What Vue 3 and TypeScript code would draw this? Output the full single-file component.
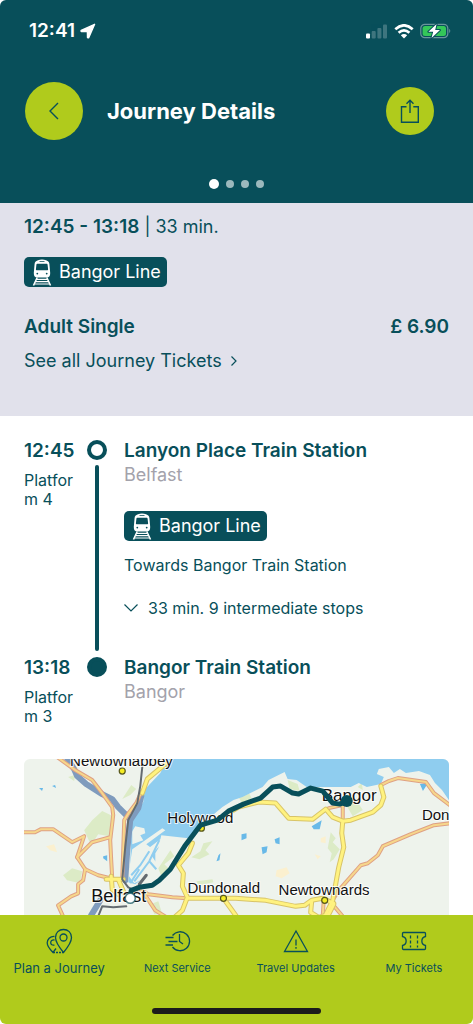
<script setup lang="ts">
import { ref } from 'vue'

interface Tab {
  id: string
  label: string
}

interface Place {
  name: string
  x: number
  y: number
  size: number
}

const tabs: Tab[] = [
  { id: 'plan', label: 'Plan a Journey' },
  { id: 'next', label: 'Next Service' },
  { id: 'updates', label: 'Travel Updates' },
  { id: 'tickets', label: 'My Tickets' },
]

const activeTab = ref('plan')
const activePage = ref(0)
const stopsOpen = ref(false)

const orangeRoads: string[] = [
  'M57 757 75 770 92 780 102 793 112 807 113 815 110 840 111 860 112 878',
  'M22 832H35L41 829H53L72 842 84 836 82 842 77 857 85 869 98 875 118 880',
  'M77 857 92 842 110 837',
  'M85 869 83 880 78 884V893L71 896 58 905 63 916 68 925',
  'M141 792 136 803 129 812 124 820 123 850 122 878',
  'M380 785 388 781 397 778 425 782 433 793 450 806',
  'M328 808 342 805V820',
  'M333 898 338 890 360 865 367 863 377 855 382 846 410 834 433 825 450 823',
  'M137 887 148 894 172 897 187 898',
  'M145 895 155 910 168 918',
  'M331 903 342 916',
  'M323 900 322 916',
]

const yellowRoads: string[] = [
  'M165 764 147 779 142 793',
  'M192 843 188 853 178 865 183 873 182 886 187 897 182 910 173 918',
  'M187 898 235 898 265 900 295 906 304 905 311 900 322 898 333 903',
  'M223 898 236 916',
  'M228 813 238 807 258 802 275 803 288 818 312 819 325 809 332 817 342 821 350 820 372 812 380 805 383 797 380 786',
  'M342 821 341 833 343 847 338 867 332 900 325 914',
  'M311 901 310 912 318 917 328 914 333 904',
  'M111 876 112 889 118 894M106 879 123 879M118 879 124 893',
]

const places: Place[] = [
  { name: 'Newtownabbey', x: 70, y: 766, size: 15 },
  { name: 'Holywood', x: 167, y: 823, size: 15 },
  { name: 'Bangor', x: 321, y: 801, size: 17 },
  { name: 'Don', x: 421, y: 820, size: 15 },
  { name: 'Belfast', x: 91, y: 902, size: 18 },
  { name: 'Dundonald', x: 187, y: 893, size: 15 },
  { name: 'Newtownards', x: 278, y: 895, size: 15 },
]
</script>

<template>
  <div class="app">
    <svg class="defs" aria-hidden="true">
      <symbol id="train" viewBox="0 0 20 27">
        <path
          fill="currentColor"
          fill-rule="evenodd"
          d="M6 1.2C8.500 .4 11.500 .4 14 1.200C16.500 2 17.200 3 17.400 5L18.200 14C18.300 17 17 18.500 14.500 18.500H5.500C3 18.500 1.700 17 1.800 14L2.600 5C2.800 3 3.500 2 6 1.200ZM7.500 2.200V3.100H12.500V2.200ZM5.200 4.800C4.700 4.900 4.500 5.200 4.400 5.700L3.900 10.200C3.800 11 4.200 11.300 4.900 11.300H15.100C15.800 11.300 16.200 11 16.100 10.200L15.600 5.700C15.500 5.200 15.300 4.900 14.800 4.800ZM5.300 13.700A.9 .9 0 1 0 5.300 15.500A.9 .9 0 1 0 5.300 13.700ZM14.700 13.700A.9 .9 0 1 0 14.700 15.500A.9 .9 0 1 0 14.700 13.700Z"
        />
        <path d="M5.200 18.500 1.500 26.500M14.800 18.500 18.500 26.500" stroke="currentColor" stroke-width="1.600" />
        <path d="M4.600 20.400H15.400M3.700 22.600H16.300M2.700 25H17.300" stroke="currentColor" stroke-width="1.100" />
      </symbol>
    </svg>

    <header class="header">
      <div class="status">
        <div class="clock">
          <span>12:41</span>
          <svg class="locate" viewBox="0 0 16 16" aria-hidden="true">
            <path d="M14.600 1.300 1.200 7.400Q.6 8.200 1.500 8.500L7.400 8.600 7.500 14.400Q7.900 15.300 8.700 14.600Z" fill="#fff" stroke="#fff" stroke-width="1.400" stroke-linejoin="round" />
          </svg>
        </div>
        <div class="signals">
          <svg class="bars" viewBox="0 0 22 15" aria-hidden="true">
            <rect x="0" y="9.500" width="4" height="5" rx="1" fill="#fff" />
            <g fill="#fff" opacity=".22">
              <rect x="5.700" y="7" width="4" height="7.500" rx="1" />
              <rect x="11.400" y="4" width="4" height="10.500" rx="1" />
              <rect x="17" y="0.500" width="4" height="14" rx="1" />
            </g>
          </svg>
          <svg class="wifi" viewBox="0 0 20 15" aria-hidden="true">
            <g fill="none" stroke="#fff" stroke-width="2.700">
              <path d="M1.300 5.300Q10-2.600 18.700 5.300" />
              <path d="M4.600 8.800Q10 4 15.400 8.800" />
            </g>
            <path d="M10 14.500 6.800 11.300Q10 8.700 13.200 11.300Z" fill="#fff" />
          </svg>
          <svg class="battery" viewBox="0 0 32 16" aria-hidden="true">
            <rect x=".8" y="1.300" width="27" height="13.400" rx="4" fill="none" stroke="#fff" stroke-opacity=".4" stroke-width="1.200" />
            <rect x="2.600" y="3" width="23.400" height="10" rx="2.500" fill="#34c759" />
            <path d="M29.300 5.800Q31.200 8 29.300 10.200Z" fill="#fff" fill-opacity=".45" />
            <path d="M16.600 1 8.400 8.800H13.200L11.500 15 20 7.100H15.200Z" fill="#fff" stroke="#084f5a" stroke-width="2" stroke-linejoin="round" paint-order="stroke" />
          </svg>
        </div>
      </div>

      <div class="title-row">
        <button class="round back" type="button" aria-label="Back">
          <svg viewBox="0 0 24 24" aria-hidden="true">
            <path d="M16 4 8 12 16 20" />
          </svg>
        </button>
        <h1>Journey Details</h1>
        <button class="round share" type="button" aria-label="Share">
          <svg viewBox="0 0 24 24" aria-hidden="true">
            <path d="M8.500 7.800H3.500V23.300H20.300V7.800H15.300M12 14V1.500M8.500 4.700 12 1.200 15.500 4.700" />
          </svg>
        </button>
      </div>

      <div class="dots">
        <button
          v-for="n in 4"
          :key="n"
          type="button"
          class="dot"
          :class="{ on: activePage === n - 1 }"
          :aria-label="`Page ${n}`"
          @click="activePage = n - 1"
        ></button>
      </div>
    </header>

    <main class="content">
      <section class="summary">
        <p class="times"><strong>12:45 - 13:18</strong> | 33 min.</p>
        <span class="badge">
          <svg viewBox="0 0 20 27" aria-hidden="true"><use href="#train" /></svg>
          Bangor Line
        </span>
        <div class="fare">
          <strong>Adult Single</strong>
          <strong>£ 6.90</strong>
        </div>
        <a class="all-tickets" href="#tickets">
          See all Journey Tickets
          <svg viewBox="0 0 8 12" aria-hidden="true"><path d="M1.500 1.500 6 6 1.500 10.500" /></svg>
        </a>
      </section>

      <section class="details">
        <ol class="timeline">
          <li class="stop">
            <div class="when">
              <strong>12:45</strong>
              <span class="platform">Platform 4</span>
            </div>
            <div class="track">
              <span class="node open"></span>
              <span class="line"></span>
            </div>
            <div class="where">
              <h2>Lanyon Place Train Station</h2>
              <p class="town">Belfast</p>
              <span class="badge leg">
                <svg viewBox="0 0 20 27" aria-hidden="true"><use href="#train" /></svg>
                Bangor Line
              </span>
              <p class="towards">Towards Bangor Train Station</p>
              <button class="stops" type="button" :aria-expanded="stopsOpen" @click="stopsOpen = !stopsOpen">
                <svg viewBox="0 0 14 10" aria-hidden="true"><path d="M.5 1.500 7 8 13.500 1.500" /></svg>
                33 min. 9 intermediate stops
              </button>
            </div>
          </li>
          <li class="stop">
            <div class="when">
              <strong>13:18</strong>
              <span class="platform">Platform 3</span>
            </div>
            <div class="track"><span class="node"></span></div>
            <div class="where">
              <h2>Bangor Train Station</h2>
              <p class="town">Bangor</p>
            </div>
          </li>
        </ol>

        <svg class="map" viewBox="24 759 424 200" preserveAspectRatio="xMidYMin slice" role="img" aria-label="Route map from Belfast to Bangor">
          <rect x="0" y="740" width="480" height="240" fill="#eef3ec" />
          <g fill="#dcebc6">
            <path d="M102 811 113 816 109 836 98 834 91 845 84 830 92 820Z" />
            <path d="M72 868 82 871 80 883 67 880 63 875Z" />
            <path d="M203 843 212 841 205 850 209 854 199 859 191 857 200 851Z" />
            <path d="M330 832 335 838 332 842 339 849 333 859 329 862 331 853 327 848Z" />
            <path d="M238 797 248 792 251 798 242 804Z" />
            <path d="M346 806 356 801 362 810 352 816Z" />
            <path d="M170 850 174 856 164 864 168 868 161 876 158 868Z" />
            <path d="M287 780 297 784 299 791 289 789Z" />
            <path d="M131 785 136 789 130 795 122 799Z" />
            <path d="M196 881 212 879 213 882 198 885Z" />
            <path d="M150 904 158 901 162 914 154 914Z" />
            <path d="M68 777 75 775 74 781Z" />
            <path d="M357 787 361 783 362 790Z" />
          </g>
          <g fill="#fbf0cf">
            <path d="M46 846 54 844 57 852 50 850Z" />
            <path d="M276 870 286 867 289 873 281 878 275 876Z" />
            <path d="M320 838 325 836 325 843 320 842ZM314 854 320 856 317 859Z" />
          </g>

          <path
            fill="#8fcdef"
            d="M168 757 160 773 144 790 143 802 136 813 132 820 131 835 130 862 128 882 135 884 148 874 155 861V853L158 848 161 835 188 838 198 825 205 821 222 807 233 800 242 797 262 787 268 780 276 776 284 772 287 779 296 780 306 787 350 787 358 783 366 787 380 784 383 777 376 774 378 769 388 767 393 773 399 769 405 773 418 771 429 775 434 783 441 790 450 803V757Z"
          />
          <g fill="#eef3ec">
            <path d="M135 826 144 828 145 833 140 835 143 840 132 844 132 831Z" />
            <path d="M132 849 162 828 165 830 146 844 150 847 143 852 160 839 163 841 151 855 155 861 157 869 146 877 134 883 128 875Z" />
          </g>
          <g fill="none" stroke="#8fcdef" stroke-width="2">
            <path d="M134 881 149 861 159 840M131 875 140 865 149 851M139 869 130 883M149 861 156 869" />
          </g>
          <g fill="#68b9e8">
            <path d="M103 856 107 855 107 861 103 858ZM241 834 246 833 246 838 241 840ZM261 847 267 846 266 852 262 854ZM274 839 279 837 279 844 275 843ZM218 855 220 853 219 860 216 861ZM39 788 43 788 42 791ZM52 786 55 785 56 788ZM311 826 321 820 319 829 313 829ZM419 784 427 783 422 791Z" />
          </g>

          <g fill="none" stroke-linejoin="round" stroke-linecap="round">
            <g stroke="#7f9bbd" stroke-width="6">
              <path d="M65 755 74 769 77 776 86 784 102 794 112 799 118 807 130 819" />
              <path d="M141 796 138 808 130 820 127 850 125 880" />
              <path d="M100 900 91 915" />
            </g>
            <g stroke="#dfa184" stroke-width="4">
              <path v-for="d in orangeRoads" :key="d" :d="d" />
            </g>
            <g stroke="#f6d78b" stroke-width="2">
              <path v-for="d in orangeRoads" :key="d" :d="d" />
            </g>
            <g stroke="#d8c468" stroke-width="5">
              <path v-for="d in yellowRoads" :key="d" :d="d" />
            </g>
            <g stroke="#fff27f" stroke-width="3">
              <path v-for="d in yellowRoads" :key="d" :d="d" />
            </g>
            <g stroke="#646b70" stroke-width="2">
              <path d="M142 767 140 786 137 803 128 820 125 847 122 879 128 887 137 891M98 916 102 906 113 907 126 906" />
            </g>
            <path d="M139 884 146 875" stroke="#646b70" stroke-width="3" />
          </g>

          <g fill="#f4ec23" stroke="#59591e" stroke-width="1.200">
            <circle cx="122" cy="771" r="3" />
            <circle cx="201" cy="828" r="3" />
            <circle cx="223" cy="898" r="3" />
            <circle cx="324" cy="900" r="3" />
          </g>
          <g class="places">
            <text v-for="p in places" :key="p.name" :x="p.x" :y="p.y" :font-size="p.size">{{ p.name }}</text>
          </g>

          <path
            class="route"
            d="M130 896 131 890 139 887 152 885 159 880 170 869 185 845 200 825 217 820 228 811 243 804 260 798 272 787 280 786 292 793 298 794 310 788 322 791 332 803 339 804 346 801"
          />
          <circle cx="346" cy="801" r="6" fill="#084f5a" />
          <circle cx="130" cy="898" r="5" fill="#fff" stroke="#084f5a" stroke-opacity=".7" stroke-width="1.500" />
        </svg>
      </section>
    </main>

    <nav class="tabs" aria-label="Main">
      <button
        v-for="tab in tabs"
        :key="tab.id"
        type="button"
        class="tab"
        :class="{ on: activeTab === tab.id }"
        @click="activeTab = tab.id"
      >
        <svg viewBox="0 0 28 28" aria-hidden="true">
          <g v-if="tab.id === 'plan'">
            <path d="M18.500 25.500C14 20 10.500 15.500 10.500 10.500C10.500 5.500 14 2.500 18.500 2.500S26.500 5.500 26.500 10.500C26.500 15.500 23 20 18.500 25.500Z" />
            <circle cx="18.500" cy="10.500" r="3.500" />
            <path d="M9.500 9.300C5 9 2.200 12.500 2.200 15.800C2.200 19.500 5 22.500 8 25.500L11 21.500M9.500 13C7 12.700 5.700 14 5.700 15.800S7.500 18.600 9.500 18" />
            <path d="M8 25.500H18" stroke-dasharray="2 1" />
          </g>
          <g v-else-if="tab.id === 'next'">
            <path d="M9.500 8.500A9.500 9.500 0 1 1 9.500 20M16.500 7V14.500L20 17" />
            <path d="M2.500 10.500H10.500M5.500 14.500H14.500M2.500 18H10" />
          </g>
          <g v-else-if="tab.id === 'updates'">
            <path d="M14 4 25.500 24.500H2.500Z" />
            <path d="M14 12.500V18.500M14 20V21.700" />
          </g>
          <g v-else>
            <path d="M3.500 5.500H24.500Q25.500 5.500 25.500 6.500V9.500A4.600 4.600 0 0 0 25.500 18.500V21.500Q25.500 22.500 24.500 22.500H3.500Q2.500 22.500 2.500 21.500V18.500A4.600 4.600 0 0 0 2.500 9.500V6.500Q2.500 5.500 3.500 5.500Z" />
            <path d="M10.500 8.500V20.500M17.500 8.500V20.500" stroke-dasharray="3 2" />
          </g>
        </svg>
        <span>{{ tab.label }}</span>
      </button>
      <div class="home-bar"></div>
    </nav>
  </div>
</template>

<style>
html,
body {
  background: #fff;
}
</style>

<style scoped>
.app {
  display: flex;
  flex-direction: column;
  height: 100vh;
  border-radius: 6px;
  overflow: hidden;
  background: #fff;
  color: #084f5a;
  font-family: Inter, "Liberation Sans", sans-serif;
  font-size: 18px;
  line-height: 24px;
}

.app * {
  box-sizing: border-box;
}

.defs {
  position: absolute;
  width: 0;
  height: 0;
}

button {
  padding: 0;
  border: 0;
  background: none;
  color: inherit;
  font: inherit;
  cursor: pointer;
}

strong {
  font-size: 19px;
  font-weight: 600;
}

p,
h1,
h2,
ol {
  margin: 0;
  padding: 0;
}

svg {
  display: block;
  flex: none;
}

.header {
  flex: none;
  padding: 19px 21px 14px;
  background: #084f5a;
  color: #fff;
}

.status {
  display: flex;
  align-items: center;
  justify-content: space-between;
  padding-left: 8px;
}

.clock {
  display: flex;
  align-items: center;
  gap: 5px;
  font-size: 19px;
  font-weight: 600;
}

.locate {
  width: 16px;
  height: 16px;
}

.signals {
  display: flex;
  align-items: center;
  gap: 6px;
}

.bars {
  width: 22px;
  height: 15px;
}

.wifi {
  width: 20px;
  height: 15px;
}

.battery {
  width: 32px;
  height: 16px;
}

.title-row {
  display: flex;
  align-items: center;
  margin-top: 39px;
  padding: 0 18px 0 4px;
}

h1 {
  flex: 1;
  margin-left: 24px;
  font-size: 22px;
  line-height: 28px;
  font-weight: 700;
}

.round {
  display: grid;
  place-items: center;
  border-radius: 50%;
  background: #b0cb1c;
}

.round path {
  fill: none;
  stroke: #084f5a;
  stroke-width: 1.4;
}

.back {
  width: 58px;
  height: 58px;
}

.back svg {
  width: 24px;
  height: 24px;
}

.share {
  width: 48px;
  height: 48px;
}

.share svg {
  width: 24px;
  height: 24px;
}

.dots {
  display: flex;
  align-items: center;
  justify-content: center;
  gap: 7px;
  height: 10px;
  margin-top: 39px;
}

.dot {
  width: 8px;
  height: 8px;
  border-radius: 50%;
  background: #9cb9bd;
}

.dot.on {
  width: 10px;
  height: 10px;
  background: #fff;
}

.content {
  flex: 1;
  min-height: 0;
  overflow-y: auto;
  scrollbar-width: none;
}

.summary {
  display: flex;
  flex-direction: column;
  align-items: flex-start;
  padding: 12px 24px 43px;
  background: #e1e1eb;
}

.badge {
  display: inline-flex;
  align-items: center;
  gap: 7px;
  height: 30px;
  padding: 0 6px 0 8px;
  border-radius: 5px;
  background: #084f5a;
  color: #fff;
}

.badge svg {
  width: 20px;
  height: 27px;
}

.summary .badge {
  margin-top: 18px;
}

.fare {
  display: flex;
  justify-content: space-between;
  align-self: stretch;
  margin-top: 28px;
}

.all-tickets {
  display: flex;
  align-items: center;
  gap: 8px;
  margin-top: 10px;
  color: inherit;
  text-decoration: none;
}

.all-tickets svg {
  width: 8px;
  height: 12px;
}

.all-tickets path,
.stops path {
  fill: none;
  stroke: #084f5a;
  stroke-width: 1.2;
}

.details {
  padding: 23px 24px 24px;
}

.timeline {
  list-style: none;
}

.stop {
  display: grid;
  grid-template-columns: 53px 40px 1fr;
}

.when {
  display: flex;
  flex-direction: column;
  gap: 8px;
}

.platform {
  font-size: 16px;
  line-height: 19px;
  overflow-wrap: anywhere;
}

.track {
  display: flex;
  flex-direction: column;
  align-items: center;
  padding-top: 1px;
}

.node {
  flex: none;
  width: 20px;
  height: 20px;
  border: 4px solid #084f5a;
  border-radius: 50%;
  background: #084f5a;
}

.node.open {
  background: #fff;
}

.line {
  flex: 1;
  width: 4px;
  margin: 5px 0;
  border-radius: 2px;
  background: #084f5a;
}

.where {
  display: flex;
  flex-direction: column;
  align-items: flex-start;
  padding-left: 7px;
}

h2 {
  font-size: 19px;
  line-height: 24px;
  font-weight: 600;
}

.town {
  color: #a3a2ab;
}

.leg {
  margin-top: 24px;
}

.towards {
  margin-top: 12px;
  font-size: 16px;
}

.stops {
  display: flex;
  align-items: center;
  gap: 10px;
  margin: 19px 0 36px;
  font-size: 16px;
}

.stops svg {
  width: 14px;
  height: 10px;
}

.map {
  width: 100%;
  height: 200px;
  margin-top: 33px;
  border-radius: 6px;
}

.places text {
  font-family: "Liberation Sans", Arial, sans-serif;
  fill: #111;
  stroke: #fff;
  stroke-width: 2;
  stroke-opacity: 0.8;
  paint-order: stroke;
}

.route {
  fill: none;
  stroke: #084f5a;
  stroke-width: 5;
  stroke-linejoin: round;
}

.tabs {
  flex: none;
  display: grid;
  grid-template-columns: repeat(4, 1fr);
  padding: 12px 0 10px;
  background: #b0cb1c;
}

.tab {
  display: flex;
  flex-direction: column;
  align-items: center;
  gap: 3px;
  font-size: 11px;
  line-height: 20px;
  white-space: nowrap;
}

.tab.on {
  font-size: 13px;
}

.tab svg {
  width: 28px;
  height: 28px;
}

.tab path,
.tab circle {
  fill: none;
  stroke: #084f5a;
  stroke-width: 1.3;
}

.home-bar {
  grid-column: 1 / -1;
  justify-self: center;
  width: 169px;
  height: 6px;
  margin-top: 30px;
  border-radius: 3px;
  background: #1b1b1b;
}
</style>
